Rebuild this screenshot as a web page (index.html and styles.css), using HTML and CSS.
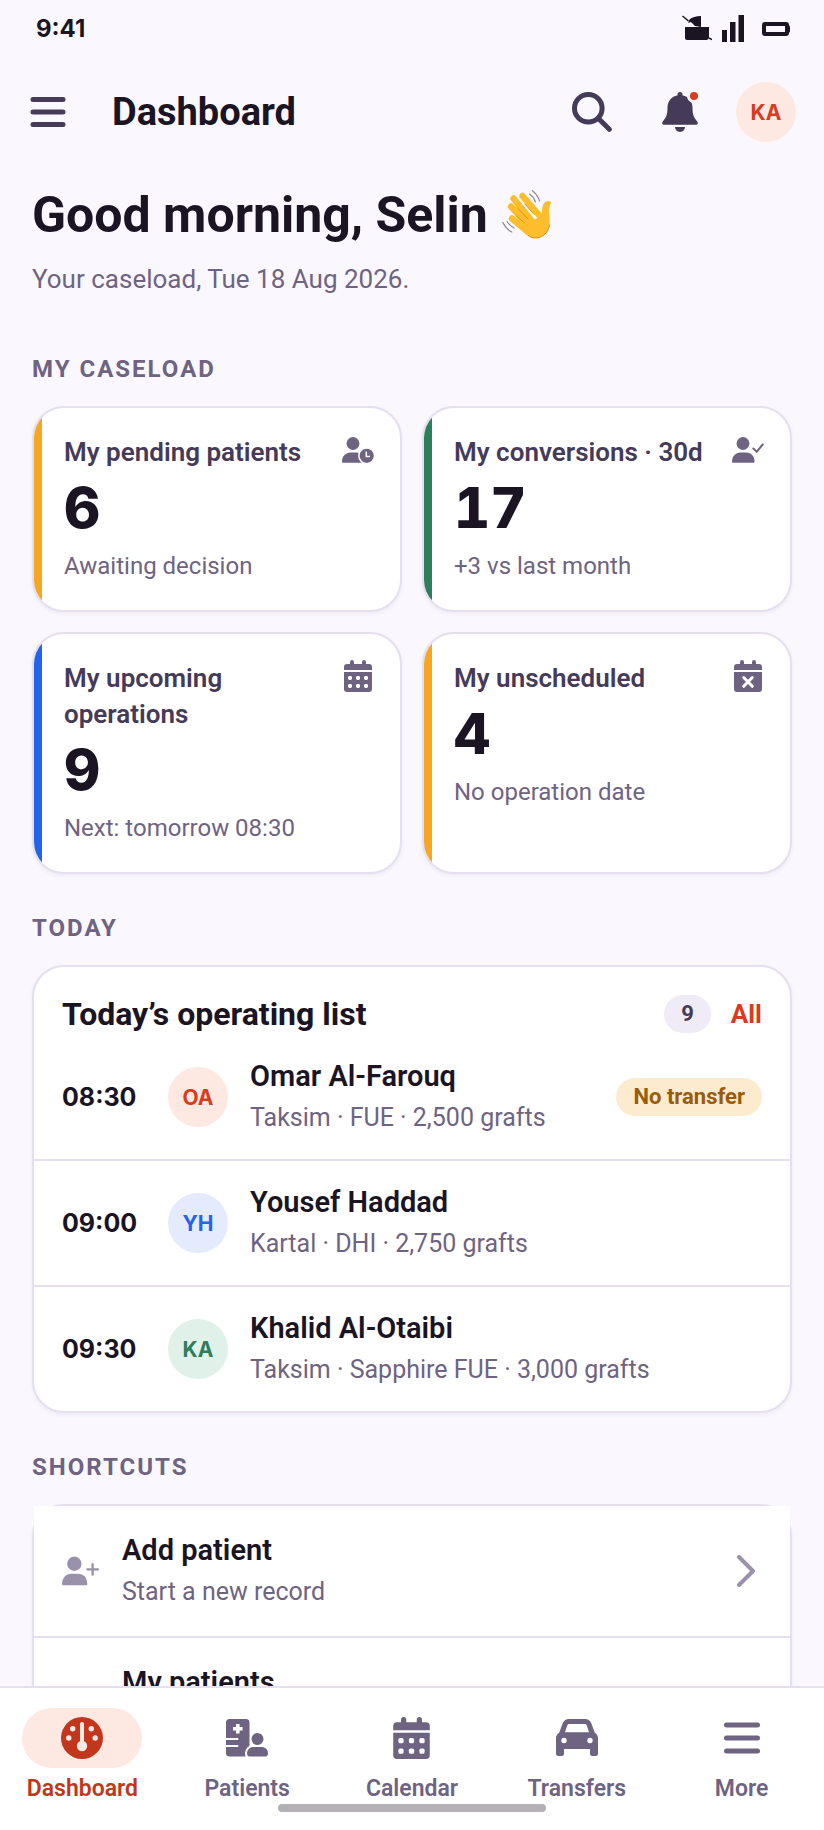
FILE: index.html
```html
<!DOCTYPE html>
<html lang="en">
<head>
    <meta charset="UTF-8">
    <meta name="viewport" content="width=device-width, initial-scale=1.0">
    <title>Dashboard</title>
    <link rel="stylesheet" href="styles.css">
</head>
<body>
    <!-- shared icons -->
    <svg class="sprite" aria-hidden="true">
        <symbol id="person" viewBox="0 0 32 32">
            <circle cx="11" cy="9.5" r="6.4"/>
            <path d="M0 27.5C0 22 4 18.500 8 18.500h6.500c4.500 0 8 3.500 8 9 0 .8-.4 1.300-1.200 1.300H1.200C.4 28.800 0 28.300 0 27.500z"/>
        </symbol>
        <symbol id="calendar" viewBox="0 0 28 32">
            <path d="M6 2a2 2 0 0 1 4 0v2h8V2a2 2 0 0 1 4 0v2h3a3 3 0 0 1 3 3v3H0V7a3 3 0 0 1 3-3h3z"/>
            <path d="M0 12h28v17a3 3 0 0 1-3 3H3a3 3 0 0 1-3-3z"/>
        </symbol>
        <symbol id="calendar-days" viewBox="0 0 28 32">
            <use href="#calendar"/>
            <g fill="#fff">
                <rect x="4" y="16" width="4" height="4" rx="1.400"/><rect x="12" y="16" width="4" height="4" rx="1.400"/><rect x="20" y="16" width="4" height="4" rx="1.400"/>
                <rect x="4" y="24" width="4" height="4" rx="1.400"/><rect x="12" y="24" width="4" height="4" rx="1.400"/><rect x="20" y="24" width="4" height="4" rx="1.400"/>
            </g>
        </symbol>
    </svg>

    <div class="screen">
        <div class="status-bar">
            <span>9:41</span>
            <div class="status-icons">
                <svg width="30" height="28" viewBox="0 0 30 28"><path d="M3 13h24v10a3 3 0 0 1-3 3H5a2 2 0 0 1-2-2z"/><path d="M19 13V2c-5 0-9 1-12 4 0 2-1 2-1 3l3-1 4 4z"/><path d="M0.500 2l6 5M27 24l3 1.500" fill="none" stroke="#1a1423" stroke-width="1.500"/></svg>
                <svg width="22" height="28" viewBox="0 0 22 28"><path d="M0 16h5v12H0zM8 8h5.500v20H8zM16.500 1H22v27h-5.500z"/></svg>
                <svg width="28" height="28" viewBox="0 0 28 28"><rect x="2" y="10" width="23" height="10" rx="1" fill="none" stroke="#1a1423" stroke-width="4"/><path d="M26 10l2.500 3v4L26 20z"/></svg>
            </div>
        </div>

        <header class="app-bar">
            <button class="icon-button" aria-label="Menu">
                <svg width="36" height="32" viewBox="0 0 36 32" stroke="#453a57" stroke-width="5" stroke-linecap="round"><path d="M3 3.500h30M3 16h30M3 28.500h30"/></svg>
            </button>
            <h2>Dashboard</h2>
            <button class="icon-button" aria-label="Search">
                <svg width="40" height="40" viewBox="0 0 40 40" fill="none" stroke="#453a57" stroke-width="5" stroke-linecap="round"><circle cx="16.300" cy="16.300" r="13.800"/><path d="M27 27l10.300 10.300"/></svg>
            </button>
            <button class="icon-button" aria-label="Notifications">
                <svg width="36" height="40" viewBox="0 0 36 40" fill="#453a57"><path d="M18 0a2.500 2.500 0 0 1 2.500 2.500V3.200C26.500 4.400 30.500 9.500 30.500 15.500c0 7.500 1.500 10 4.700 14 1.200 1.500.4 3.300-1.500 3.300H2.300c-1.900 0-2.700-1.800-1.500-3.300 3.200-4 4.700-6.500 4.700-14C5.500 9.500 9.500 4.400 15.500 3.200V2.500A2.500 2.500 0 0 1 18 0zM13 35h10a5 5 0 0 1-10 0z"/></svg>
                <span class="dot"></span>
            </button>
            <button class="avatar red" aria-label="Account">KA</button>
        </header>

        <main>
            <h1>Good morning, Selin
                <svg width="50" height="50" viewBox="0 0 50 50" role="img" aria-label="waving hand" fill="none" stroke-linecap="round" stroke-linejoin="round">
                    <g stroke="#fdbd2c" stroke-width="6.400">
                        <path d="M11.500 8.500L30 31M20.500 6L37 25M9 16.500L27 36M10 28.500L26 42"/>
                    </g>
                    <path d="M20 38L40 25C40 19 40 14 44 11.500c2.500-1.500 5 0 5 1.500-2 4-2 7-1.500 12C48 34 48 38 44 43c-5 6-13 6.500-18 2.500L13 34z" fill="#fdbd2c"/>
                    <path d="M15 17.500L26 29M14.500 26L22.500 33M23 14l9 10.500" stroke="#e08f14" stroke-width="1"/>
                    <path d="M26 45.500c5 4 13 3.500 18-2.500 2-2.500 3-5 3.500-8" stroke="#e08f14" stroke-width="1"/>
                    <path d="M27.500 4c3 2 5 5 6 8M30.500 0.700c3.500 3 6 6.300 7 10.300M0.800 32.500c2 4 5 7.500 9 9.500M5 31.500c2 3 4 5 7 6.500" stroke="#8b8b90" stroke-width="1.200"/>
                </svg>
            </h1>
            <p class="intro">Your caseload, Tue 18 Aug 2026.</p>

            <h3>MY CASELOAD</h3>
            <section class="stats">
                <article class="card stat amber">
                    <div class="stat-head">
                        <span>My pending patients</span>
                        <svg width="32" height="32" viewBox="0 0 32 32"><use href="#person"/><circle cx="24.700" cy="21.800" r="8.600" fill="#fff"/><circle cx="24.700" cy="21.800" r="7.100"/><path d="M24.300 17.500V22.500H28" fill="none" stroke="#fff" stroke-width="1.500"/></svg>
                    </div>
                    <strong>6</strong>
                    <p>Awaiting decision</p>
                </article>
                <article class="card stat green">
                    <div class="stat-head">
                        <span>My conversions · 30d</span>
                        <svg width="32" height="32" viewBox="0 0 32 32"><use href="#person"/><path d="M21.300 14.500l3.400 3.300 6-7.300" fill="none" stroke="#6f6382" stroke-width="2" stroke-linecap="round"/></svg>
                    </div>
                    <strong>17</strong>
                    <p>+3 vs last month</p>
                </article>
                <article class="card stat blue">
                    <div class="stat-head">
                        <span>My upcoming operations</span>
                        <svg width="32" height="32" viewBox="-2 0 32 32"><use href="#calendar-days" width="28" height="32"/></svg>
                    </div>
                    <strong>9</strong>
                    <p>Next: tomorrow 08:30</p>
                </article>
                <article class="card stat amber">
                    <div class="stat-head">
                        <span>My unscheduled</span>
                        <svg width="32" height="32" viewBox="-2 0 32 32"><use href="#calendar" width="28" height="32"/><path d="M9.700 17.500l8.600 8.800M18.300 17.500l-8.600 8.800" stroke="#fff" stroke-width="3" stroke-linecap="round"/></svg>
                    </div>
                    <strong>4</strong>
                    <p>No operation date</p>
                </article>
            </section>

            <h3>TODAY</h3>
            <section class="card">
                <div class="list-head">
                    <h4>Today’s operating list</h4>
                    <span class="pill">9</span>
                    <a href="#">All</a>
                </div>
                <div class="row">
                    <time>08:30</time>
                    <span class="avatar red">OA</span>
                    <div class="info">
                        <b>Omar Al-Farouq</b>
                        <p>Taksim · FUE · 2,500 grafts</p>
                    </div>
                    <span class="pill warning">No transfer</span>
                </div>
                <div class="row">
                    <time>09:00</time>
                    <span class="avatar indigo">YH</span>
                    <div class="info">
                        <b>Yousef Haddad</b>
                        <p>Kartal · DHI · 2,750 grafts</p>
                    </div>
                </div>
                <div class="row">
                    <time>09:30</time>
                    <span class="avatar mint">KA</span>
                    <div class="info">
                        <b>Khalid Al-Otaibi</b>
                        <p>Taksim · Sapphire FUE · 3,000 grafts</p>
                    </div>
                </div>
            </section>

            <h3>SHORTCUTS</h3>
            <section class="card shortcuts">
                <a class="row" href="#">
                    <svg width="38" height="36" viewBox="0 0 36 34"><use href="#person" width="34" height="34"/><path d="M24 15.500h10M29 10.500v10" stroke="#9a91aa" stroke-width="2.200" stroke-linecap="round"/></svg>
                    <div class="info">
                        <b>Add patient</b>
                        <p>Start a new record</p>
                    </div>
                    <svg width="20" height="32" viewBox="0 0 20 32" fill="none" stroke="#9a91aa" stroke-width="4" stroke-linecap="round" stroke-linejoin="round"><path d="M3 2l14 14L3 30"/></svg>
                </a>
                <a class="row" href="#">
                    <svg width="38" height="36"></svg>
                    <div class="info">
                        <b>My patients</b>
                    </div>
                </a>
            </section>
        </main>

        <nav>
            <a class="active" href="#">
                <span class="nav-icon"><svg width="42" height="42" viewBox="0 0 42 42"><circle cx="21" cy="21" r="21"/><g fill="#fde8e2"><circle cx="11.700" cy="11.800" r="2.700"/><circle cx="30.300" cy="11.800" r="2.700"/><circle cx="7.800" cy="21" r="2.700"/><circle cx="34.200" cy="21" r="2.700"/><circle cx="21" cy="29" r="5.200"/><rect x="19" y="5" width="4" height="22" rx="2"/></g></svg></span>
                Dashboard
            </a>
            <a href="#">
                <span class="nav-icon"><svg width="42" height="42" viewBox="0 0 42 42"><rect y="2" width="23.500" height="37.500" rx="3.500"/><path d="M11.800 7v9.500M7 11.700h9.600" stroke="#fff" stroke-width="3.600"/><path d="M0 22h11.500M0 29h11.500" stroke="#fff" stroke-width="2" stroke-linecap="round"/><circle cx="31.500" cy="22" r="6"/><path d="M21 36.500c0-4 3-6.500 6.500-6.500h8c3.500 0 6.500 2.500 6.500 6.500 0 2-1 3-2.500 3h-16c-1.500 0-2.500-1-2.500-3z" stroke="#fff" stroke-width="4" paint-order="stroke"/></svg></span>
                Patients
            </a>
            <a href="#">
                <span class="nav-icon"><svg width="37" height="42" viewBox="0 0 28 32"><use href="#calendar-days"/></svg></span>
                Calendar
            </a>
            <a href="#">
                <span class="nav-icon"><svg width="42" height="42" viewBox="0 0 42 42"><path fill-rule="evenodd" d="M13 2h16c3 0 5.500 2 6.500 4.700l3.300 9C41 17 42 19 42 21v15.500a2.500 2.500 0 0 1-2.500 2.500h-3a2.500 2.500 0 0 1-2.500-2.500V32H8v4.500A2.500 2.500 0 0 1 5.500 39h-3A2.500 2.500 0 0 1 0 36.500V21c0-2 1-4 3.200-5.300l3.300-9C7.500 4 10 2 13 2zM13.300 7c-1 0-1.800.6-2.100 1.500L9 15.300h24l-2.200-6.800c-.3-.9-1.100-1.500-2.100-1.500z"/><circle cx="8" cy="23.500" r="2.700" fill="#fff"/><circle cx="34" cy="23.500" r="2.700" fill="#fff"/></svg></span>
                Transfers
            </a>
            <a href="#">
                <span class="nav-icon"><svg width="42" height="42" viewBox="0 0 42 42" stroke="#6f6382" stroke-width="5" stroke-linecap="round"><path d="M5.500 8h31M5.500 21h31M5.500 34h31"/></svg></span>
                More
            </a>
            <span class="home-indicator"></span>
        </nav>
    </div>
</body>
</html>
```

FILE: styles.css
```css
* {
    box-sizing: border-box;
}

body {
    margin: 0;
    font-family: Roboto, "Liberation Sans", sans-serif;
    background: #faf8fe;
    color: #1a1423;
}

h1, h2, h3, h4, p {
    margin: 0;
}

a {
    color: inherit;
    text-decoration: none;
}

button {
    border: none;
    padding: 0;
    background: none;
    cursor: pointer;
}

svg {
    flex-shrink: 0;
}

.sprite {
    position: absolute;
    width: 0;
    height: 0;
}

.screen {
    display: flex;
    flex-direction: column;
    height: 100vh;
    overflow: hidden;
}

.status-bar {
    display: flex;
    justify-content: space-between;
    align-items: center;
    height: 56px;
    flex-shrink: 0;
    padding: 0 34px 0 36px;
    font: bold 24px Inter, sans-serif;
}

.status-icons {
    display: flex;
    gap: 10px;
    fill: #1a1423;
}

.status-icons svg:last-child {
    margin-left: 8px;
}

.app-bar {
    display: flex;
    align-items: center;
    height: 112px;
    flex-shrink: 0;
    padding: 0 28px 0 4px;
}

.app-bar h2 {
    flex: 1;
    margin-left: 20px;
    font-size: 38px;
}

.app-bar .avatar {
    margin-left: 12px;
}

.icon-button {
    position: relative;
    display: flex;
    align-items: center;
    justify-content: center;
    width: 88px;
    height: 88px;
}

.dot {
    position: absolute;
    top: 21px;
    right: 23px;
    width: 14px;
    height: 14px;
    border: 3px solid #faf8fe;
    border-radius: 50%;
    background: #d83c20;
}

.avatar {
    display: flex;
    align-items: center;
    justify-content: center;
    flex-shrink: 0;
    width: 60px;
    height: 60px;
    border-radius: 50%;
    font: bold 21px Inter, sans-serif;
}

.red {
    background: #fde8e2;
    color: #d83c20;
}

.indigo {
    background: #e4ebff;
    color: #2563eb;
}

.mint {
    background: #e0f1e9;
    color: #2e7d5b;
}

main {
    flex: 1;
    min-height: 0;
    overflow: hidden;
    padding: 17px 32px 0;
}

h1 {
    display: flex;
    align-items: center;
    gap: 14px;
    font-size: 50px;
    line-height: 60px;
}

.intro {
    margin: 14px 0 56px;
    font-size: 26px;
    line-height: 40px;
    color: #6f6382;
}

h3 {
    margin: 40px 0 23px;
    font-size: 24px;
    line-height: 28px;
    letter-spacing: 2px;
    color: #6f6382;
}

.card {
    border: 2px solid #e5dff0;
    border-radius: 32px;
    background: #fff;
    box-shadow: 0 2px 4px rgba(40, 20, 80, 0.06);
}

.stats {
    display: grid;
    grid-template-columns: 1fr 1fr;
    gap: 20px;
}

.stat {
    position: relative;
    overflow: hidden;
    padding: 26px 26px 26px 30px;
}

.stat::before {
    content: "";
    position: absolute;
    top: 0;
    bottom: 0;
    left: 0;
    width: 8px;
}

.amber::before {
    background: #f5a623;
}

.green::before {
    background: #2e7d5b;
}

.blue::before {
    background: #2563eb;
}

.stat-head {
    display: flex;
    justify-content: space-between;
    gap: 24px;
    font-size: 26px;
    font-weight: 600;
    line-height: 36px;
    color: #453a57;
}

.stat-head svg {
    fill: #6f6382;
}

.stat strong {
    display: block;
    margin: 10px 0 12px;
    font: 800 56px/56px Inter, sans-serif;
    font-variant-numeric: tabular-nums;
}

.stat p {
    font-size: 24px;
    line-height: 36px;
    color: #6f6382;
}

.list-head {
    display: flex;
    align-items: center;
    padding: 28px 28px 2px;
}

.list-head h4 {
    flex: 1;
    font-size: 32px;
    line-height: 38px;
}

.list-head a {
    margin-left: 20px;
    font-size: 26px;
    font-weight: bold;
    color: #d83c20;
}

.pill {
    padding: 0 17px;
    border-radius: 20px;
    background: #f0ecf7;
    color: #453a57;
    font-size: 22px;
    font-weight: bold;
    line-height: 38px;
}

.warning {
    background: #fcebcf;
    color: #9a5b0b;
}

.row {
    display: flex;
    align-items: center;
    gap: 22px;
    padding: 20px 28px;
}

.row + .row {
    border-top: 2px solid #e5dff0;
}

.row time {
    width: 84px;
    font: bold 25px Inter, sans-serif;
}

.info {
    flex: 1;
}

.info b {
    display: block;
    font-size: 29px;
    font-weight: 600;
    line-height: 42px;
}

.info p {
    font-size: 25px;
    line-height: 42px;
    color: #6f6382;
}

.shortcuts .row {
    padding: 23px 34px 23px 28px;
    background: #fff;
    fill: #9a91aa;
}

nav {
    position: relative;
    display: grid;
    grid-template-columns: repeat(5, 1fr);
    flex-shrink: 0;
    height: 144px;
    padding-top: 20px;
    border-top: 2px solid #e5dff0;
    background: #fff;
}

nav a {
    display: flex;
    flex-direction: column;
    align-items: center;
    gap: 7px;
    font-size: 23px;
    font-weight: 600;
    line-height: 28px;
    color: #6f6382;
    fill: #6f6382;
}

.nav-icon {
    display: flex;
    align-items: center;
    justify-content: center;
    width: 120px;
    height: 60px;
    border-radius: 30px;
}

nav .active {
    color: #c1361c;
    fill: #c1361c;
}

.active .nav-icon {
    background: #fde8e2;
}

.home-indicator {
    position: absolute;
    bottom: 18px;
    left: 50%;
    width: 268px;
    height: 8px;
    border-radius: 4px;
    background: #b3b0b6;
    transform: translateX(-50%);
}
```
